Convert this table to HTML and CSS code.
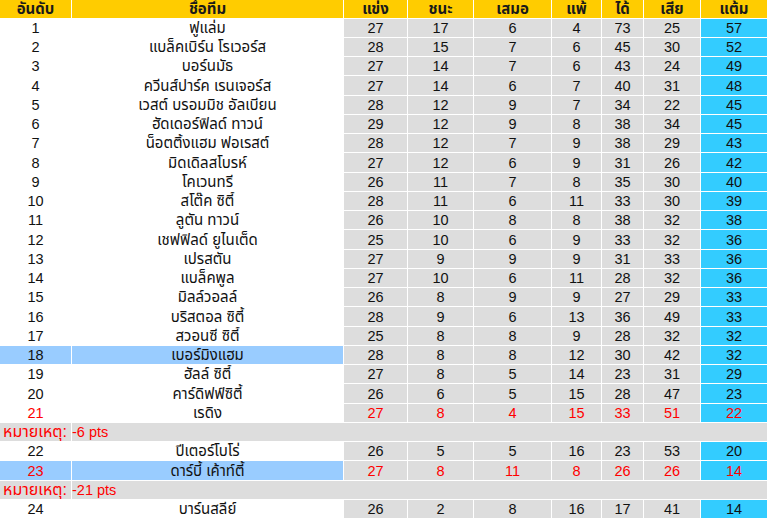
FILE: index.html
```html
<!DOCTYPE html>
<html lang="th">
<head>
<meta charset="utf-8">
<title>ตารางคะแนน</title>
<link rel="stylesheet" href="styles.css">
</head>
<body>
<table class="standings">
  <colgroup>
    <col class="c-rank"><col class="c-name"><col class="c-p"><col class="c-w"><col class="c-d"><col class="c-l"><col class="c-f"><col class="c-a"><col class="c-pts">
  </colgroup>
  <thead>
    <tr class="head">
      <th>อันดับ</th><th>ชื่อทีม</th><th>แข่ง</th><th>ชนะ</th><th>เสมอ</th><th>แพ้</th><th>ได้</th><th>เสีย</th><th>แต้ม</th>
    </tr>
  </thead>
  <tbody>
    <tr><td class="rank">1</td><td class="name">ฟูแล่ม</td><td>27</td><td>17</td><td>6</td><td>4</td><td>73</td><td>25</td><td class="pts">57</td></tr>
    <tr><td class="rank">2</td><td class="name">แบล็คเบิร์น โรเวอร์ส</td><td>28</td><td>15</td><td>7</td><td>6</td><td>45</td><td>30</td><td class="pts">52</td></tr>
    <tr><td class="rank">3</td><td class="name">บอร์นมัธ</td><td>27</td><td>14</td><td>7</td><td>6</td><td>43</td><td>24</td><td class="pts">49</td></tr>
    <tr><td class="rank">4</td><td class="name">ควีนส์ปาร์ค เรนเจอร์ส</td><td>27</td><td>14</td><td>6</td><td>7</td><td>40</td><td>31</td><td class="pts">48</td></tr>
    <tr><td class="rank">5</td><td class="name">เวสต์ บรอมมิช อัลเบียน</td><td>28</td><td>12</td><td>9</td><td>7</td><td>34</td><td>22</td><td class="pts">45</td></tr>
    <tr><td class="rank">6</td><td class="name">ฮัดเดอร์ฟิลด์ ทาวน์</td><td>29</td><td>12</td><td>9</td><td>8</td><td>38</td><td>34</td><td class="pts">45</td></tr>
    <tr><td class="rank">7</td><td class="name">น็อตติ้งแฮม ฟอเรสต์</td><td>28</td><td>12</td><td>7</td><td>9</td><td>38</td><td>29</td><td class="pts">43</td></tr>
    <tr><td class="rank">8</td><td class="name">มิดเดิลสโบรห์</td><td>27</td><td>12</td><td>6</td><td>9</td><td>31</td><td>26</td><td class="pts">42</td></tr>
    <tr><td class="rank">9</td><td class="name">โคเวนทรี</td><td>26</td><td>11</td><td>7</td><td>8</td><td>35</td><td>30</td><td class="pts">40</td></tr>
    <tr><td class="rank">10</td><td class="name">สโต๊ค ซิตี้</td><td>28</td><td>11</td><td>6</td><td>11</td><td>33</td><td>30</td><td class="pts">39</td></tr>
    <tr><td class="rank">11</td><td class="name">ลูตัน ทาวน์</td><td>26</td><td>10</td><td>8</td><td>8</td><td>38</td><td>32</td><td class="pts">38</td></tr>
    <tr><td class="rank">12</td><td class="name">เชฟฟิลด์ ยูไนเต็ด</td><td>25</td><td>10</td><td>6</td><td>9</td><td>33</td><td>32</td><td class="pts">36</td></tr>
    <tr><td class="rank">13</td><td class="name">เปรสตัน</td><td>27</td><td>9</td><td>9</td><td>9</td><td>31</td><td>33</td><td class="pts">36</td></tr>
    <tr><td class="rank">14</td><td class="name">แบล็คพูล</td><td>27</td><td>10</td><td>6</td><td>11</td><td>28</td><td>32</td><td class="pts">36</td></tr>
    <tr><td class="rank">15</td><td class="name">มิลล์วอลล์</td><td>26</td><td>8</td><td>9</td><td>9</td><td>27</td><td>29</td><td class="pts">33</td></tr>
    <tr><td class="rank">16</td><td class="name">บริสตอล ซิตี้</td><td>28</td><td>9</td><td>6</td><td>13</td><td>36</td><td>49</td><td class="pts">33</td></tr>
    <tr><td class="rank">17</td><td class="name">สวอนซี ซิตี้</td><td>25</td><td>8</td><td>8</td><td>9</td><td>28</td><td>32</td><td class="pts">32</td></tr>
    <tr class="mark"><td class="rank">18</td><td class="name">เบอร์มิงแฮม</td><td>28</td><td>8</td><td>8</td><td>12</td><td>30</td><td>42</td><td class="pts">32</td></tr>
    <tr><td class="rank">19</td><td class="name">ฮัลล์ ซิตี้</td><td>27</td><td>8</td><td>5</td><td>14</td><td>23</td><td>31</td><td class="pts">29</td></tr>
    <tr><td class="rank">20</td><td class="name">คาร์ดิฟฟ์ซิตี้</td><td>26</td><td>6</td><td>5</td><td>15</td><td>28</td><td>47</td><td class="pts">23</td></tr>
    <tr class="deduct"><td class="rank">21</td><td class="name">เรดิง</td><td>27</td><td>8</td><td>4</td><td>15</td><td>33</td><td>51</td><td class="pts">22</td></tr>
    <tr class="note"><td class="note-label">หมายเหตุ:</td><td class="note-text" colspan="8">-6 pts</td></tr>
    <tr><td class="rank">22</td><td class="name">ปีเตอร์โบโร่</td><td>26</td><td>5</td><td>5</td><td>16</td><td>23</td><td>53</td><td class="pts">20</td></tr>
    <tr class="mark deduct"><td class="rank">23</td><td class="name">ดาร์บี้ เค้าท์ตี้</td><td>27</td><td>8</td><td>11</td><td>8</td><td>26</td><td>26</td><td class="pts">14</td></tr>
    <tr class="note"><td class="note-label">หมายเหตุ:</td><td class="note-text" colspan="8">-21 pts</td></tr>
    <tr><td class="rank">24</td><td class="name">บาร์นสลีย์</td><td>26</td><td>2</td><td>8</td><td>16</td><td>17</td><td>41</td><td class="pts">14</td></tr>
  </tbody>
</table>
</body>
</html>
```

FILE: styles.css
```css
html, body {
  margin: 0;
  padding: 0;
  background: #ffffff;
}

.standings {
  border-collapse: separate;
  border-spacing: 0;
  table-layout: fixed;
  width: 767px;
  font-family: "Liberation Sans", Tahoma, "Noto Sans Thai", "Noto Sans", sans-serif;
  font-size: 14.5px;
  color: #111111;
}

.c-rank { width: 72px; }
.c-name { width: 272px; }
.c-p { width: 64px; }
.c-w { width: 66px; }
.c-d { width: 78px; }
.c-l { width: 50px; }
.c-f { width: 42px; }
.c-a { width: 57px; }
.c-pts { width: 66px; }

.standings th,
.standings td {
  padding: 0;
  border-right: 1px solid #ffffff;
  border-bottom: 1px solid #ffffff;
  text-align: center;
  vertical-align: middle;
  line-height: 16px;
  white-space: nowrap;
  overflow: hidden;
}

.standings th:last-child,
.standings td:last-child {
  border-right: 0;
}

.head th {
  height: 17.7px;
  background: #ffcc00;
  font-weight: bold;
  font-size: 15px;
  color: #1a1a1a;
}

.standings tbody td {
  height: 18.25px;
  background: #dddddd;
}

.standings tbody td.name {
  font-size: 15px;
}

.standings tbody td.rank,
.standings tbody td.name {
  background: #ffffff;
}

.standings tbody td.pts {
  background: #33ccff;
}

.standings tbody tr.mark td.rank,
.standings tbody tr.mark td.name {
  background: #99ccff;
}

.deduct td {
  color: #ff0000;
}

.deduct td.name {
  color: #111111;
}

.standings tbody tr.note td {
  background: #dddddd;
  color: #ff0000;
  text-align: left;
}

.standings tbody tr.note td.note-label {
  padding-left: 3px;
  font-size: 16px;
}

.standings tbody tr.note td.note-text {
  padding-left: 0;
}
```
